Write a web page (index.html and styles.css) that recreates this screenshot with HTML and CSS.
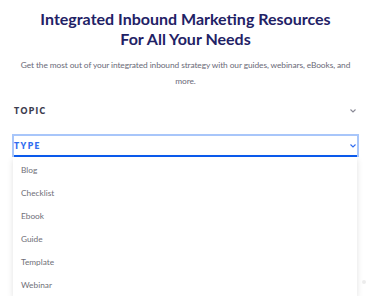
FILE: index.html
```html
<!DOCTYPE html>
<html lang="en">
<head>
    <meta charset="UTF-8">
    <meta name="viewport" content="width=device-width, initial-scale=1.0">
    <title>Resources</title>
    <link rel="stylesheet" href="styles.css">
</head>
<body>

<div class="container">
    <h1 class="title">Integrated Inbound Marketing Resources<br>For All Your Needs</h1>
    <p class="intro">Get the most out of your integrated inbound strategy with our guides, webinars, eBooks, and more.</p>

    <div class="filter">
        <span class="filter-label">Topic</span>
        <svg class="chevron" width="6" height="4" viewBox="0 0 6 4"><path d="M0.5 0.5 L3 3 L5.5 0.5" fill="none" stroke="currentColor" stroke-width="1.1"/></svg>
    </div>

    <div class="filter-open">
        <div class="filter-head">
            <span class="filter-label">Type</span>
            <svg class="chevron" width="6" height="4" viewBox="0 0 6 4"><path d="M0.5 0.5 L3 3 L5.5 0.5" fill="none" stroke="currentColor" stroke-width="1.1"/></svg>
        </div>
    </div>
    <ul class="options">
        <li>Blog</li>
        <li>Checklist</li>
        <li>Ebook</li>
        <li>Guide</li>
        <li>Template</li>
        <li>Webinar</li>
    </ul>
</div>

<span class="scroll-dot"></span>

</body>
</html>
```

FILE: styles.css
```css
body {
    margin: 0;
    font-family: Lato, "Noto Sans", sans-serif;
    background: #fff;
    overflow: hidden;
}
.container {
    padding: 9px 11px 0 12px;
}
.title {
    margin: 0;
    text-align: center;
    font-size: 16px;
    line-height: 20px;
    font-weight: 700;
    color: #1f2266;
}
.intro {
    margin: 8px 0 0;
    text-align: center;
    font-size: 8.4px;
    line-height: 16px;
    letter-spacing: -0.1px;
    color: #6a6a78;
}
.filter {
    display: flex;
    align-items: center;
    justify-content: space-between;
    height: 24px;
    margin-top: 10px;
    padding: 0 2px;
    color: #8a8a96;
}
.filter-label {
    font-size: 8.5px;
    font-weight: 800;
    letter-spacing: 1.4px;
    text-transform: uppercase;
    color: #3d3d4f;
}
.chevron {
    display: block;
    margin-right: 1px;
}
.filter-open {
    margin-top: 11px;
    border: 2px solid #a8c6fa;
    border-bottom: none;
    color: #2f6cf0;
}
.filter-head {
    display: flex;
    align-items: center;
    justify-content: space-between;
    height: 19px;
    border-bottom: 2px solid #0b5cf0;
}
.filter-open .filter-label {
    color: #2f6cf0;
}
.options {
    margin: 0 2px 0 1px;
    padding: 2px 0 0;
    list-style: none;
    background: #fff;
    box-shadow: 0 2px 6px rgba(0, 0, 0, 0.12);
}
.options li {
    height: 23px;
    line-height: 23px;
    padding-left: 8px;
    font-size: 8.3px;
    color: #6f6f78;
}
.scroll-dot {
    position: absolute;
    left: 362px;
    top: 280px;
    width: 4px;
    height: 4px;
    border-radius: 50%;
    background: #ececec;
}
```
